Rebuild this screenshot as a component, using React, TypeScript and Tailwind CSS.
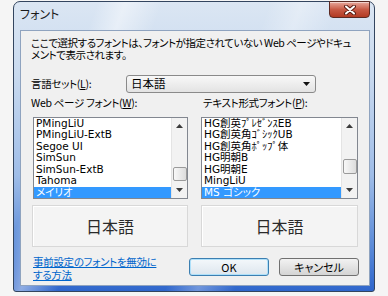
import React from 'react';

const leftFonts = ['PMingLiU', 'PMingLiU-ExtB', 'Segoe UI', 'SimSun', 'SimSun-ExtB', 'Tahoma', 'メイリオ'];
const rightFonts = ['HG創英ﾌﾟﾚｾﾞﾝｽEB', 'HG創英角ｺﾞｼｯｸUB', 'HG創英角ﾎﾟｯﾌﾟ体', 'HG明朝B', 'HG明朝E', 'MingLiU', 'MS ゴシック'];

function Arrow({ up }: { up?: boolean }) {
  return (
    <div className="h-[16px] flex items-center justify-center">
      <svg width="7" height="4" viewBox="0 0 7 4">
        {up ? <path d="M0 4 L3.5 0 L7 4 Z" fill="#3b3b3b" /> : <path d="M0 0 L3.5 4 L7 0 Z" fill="#3b3b3b" />}
      </svg>
    </div>
  );
}

function FontList({ items, width, thumbTop, thumbH }: { items: string[]; width: string; thumbTop: string; thumbH: string }) {
  return (
    <div className={`${width} h-[82px] border border-[#828790] bg-white flex`}>
      <div className="flex-1 overflow-hidden flex flex-col justify-end">
        {items.map((it, i) => {
          const sel = i === items.length - 1;
          return (
            <div
              key={it}
              className={`h-[11.5px] shrink-0 leading-[11.5px] pl-[2px] text-[10.5px] tracking-normal whitespace-nowrap font-['DejaVu_Sans','Noto_Sans_CJK_JP',sans-serif] ${
                sel ? 'bg-[#3399ff] text-white' : 'text-black'
              }`}
            >
              {it}
            </div>
          );
        })}
      </div>
      <div className="w-[16px] bg-[#f2f2f2] border-l border-[#e4e4e4] flex flex-col">
        <Arrow up />
        <div className="flex-1 flex flex-col items-center">
          <div
            className={`${thumbTop} ${thumbH} w-[14px] rounded-[2px] border border-[#9a9a9a] bg-linear-to-r from-[#f8f8f8] to-[#dcdcdc]`}
          />
        </div>
        <Arrow />
      </div>
    </div>
  );
}

function Preview({ width }: { width: string }) {
  return (
    <div
      className={`${width} h-[42px] border border-[#d8d8d8] bg-[#f4f4f4] shadow-[inset_1px_1px_0_#ffffff] flex items-center justify-center text-[16px] tracking-normal text-[#2a2a2a]`}
    >
      日本語
    </div>
  );
}

export default function App() {
  return (
    <div className="w-[388px] h-[296px] bg-[#f5f5f5] pl-[13px] pt-[1px] font-['Noto_Sans_CJK_JP',sans-serif] [font-feature-settings:'palt'] text-black">
      {/* Window frame */}
      <div className="w-[362px] h-[291px] rounded-t-[7px] rounded-b-[3px] border border-[#33455f] flex flex-col bg-[linear-gradient(110deg,transparent_18%,rgba(255,255,255,0.45)_24%,transparent_32%,transparent_55%,rgba(255,255,255,0.3)_62%,transparent_70%),linear-gradient(180deg,#dbe6f3_0%,#c9daef_25%,#9fbde8_60%,#5a8ad8_85%,#2f66cc_100%)]">
        {/* Title bar */}
        <div className="h-[28px] flex items-start justify-between pl-[6px]">
          <span className="mt-[5px] text-[12px] leading-[14px] text-[#1b1b1b]">フォント</span>
          <div className="w-[41px] h-[17px] mr-[4px] -mt-px rounded-b-[4px] border border-[#5c2a23] bg-linear-to-b from-[#e6a89c] via-[#c85a45] to-[#b23a22] shadow-[inset_0_1px_0_rgba(255,255,255,0.5)] flex items-center justify-center">
            <svg width="12" height="10" viewBox="0 0 12 10">
              <path d="M2 1.5 L10 8.5 M10 1.5 L2 8.5" stroke="#5a1e14" strokeWidth="4" strokeLinecap="round" />
              <path d="M2 1.5 L10 8.5 M10 1.5 L2 8.5" stroke="#ffffff" strokeWidth="2" strokeLinecap="round" />
            </svg>
          </div>
        </div>

        {/* Client area */}
        <div className="flex-1 ml-[6px] mr-[4px] mb-[5px] bg-[#f0f0f0] border border-[#8fa3bf] pl-[10px] pr-[6px] pt-[6px] flex flex-col text-[10.5px] tracking-[-0.3px]">
          <p className="leading-[12px] whitespace-nowrap tracking-[-0.45px]">
            ここで選択するフォントは、フォントが指定されていない Web ページやドキュ
            <br />
            メントで表示されます。
          </p>

          <div className="mt-[14px] h-[18px] flex items-center">
            <span className="w-[95px]">言語セット(<span className="underline">L</span>):</span>
            <div className="w-[190px] h-[18px] rounded-[3px] border border-[#8a8a8a] bg-linear-to-b from-[#f8f8f8] to-[#e3e3e3] flex items-center justify-between pl-[4px] pr-[5px]">
              <span className="text-[11.5px] tracking-normal">日本語</span>
              <svg width="7" height="4" viewBox="0 0 7 4">
                <path d="M0 0 L3.5 4 L7 0 Z" fill="#111" />
              </svg>
            </div>
          </div>

          <div className="mt-[4px] h-[12px] leading-[12px] flex">
            <span className="w-[172px]">Web ページ フォント(<span className="underline">W</span>):</span>
            <span>テキスト形式フォント(<span className="underline">P</span>):</span>
          </div>

          <div className="mt-[8px] ml-[2px] flex gap-[13px]">
            <FontList items={leftFonts} width="w-[155px]" thumbTop="mt-[33px]" thumbH="h-[14px]" />
            <FontList items={rightFonts} width="w-[157px]" thumbTop="mt-[25px]" thumbH="h-[15px]" />
          </div>

          <div className="mt-[6px] ml-[1px] flex gap-[13px]">
            <Preview width="w-[156px]" />
            <Preview width="w-[157px]" />
          </div>

          <div className="mt-[9px] ml-[2px] flex justify-between items-start">
            <a className="text-[#0066cc] underline leading-[12.5px] whitespace-nowrap">
              事前設定のフォントを無効に
              <br />
              する方法
            </a>
            <div className="flex gap-[10px] mt-[2px] mr-[4px]">
              <button className="w-[80px] h-[18px] rounded-[3px] border border-[#3c7fb1] bg-linear-to-b from-[#f4f8fb] to-[#dde6ee] shadow-[inset_0_0_0_1px_#aee0fa] text-[11px] leading-[14px] tracking-normal">
                OK
              </button>
              <button className="w-[80px] h-[18px] rounded-[3px] border border-[#707070] bg-linear-to-b from-[#f2f2f2] to-[#d4d4d4] text-[11px] leading-[14px] tracking-normal">
                キャンセル
              </button>
            </div>
          </div>
        </div>
      </div>
    </div>
  );
}
